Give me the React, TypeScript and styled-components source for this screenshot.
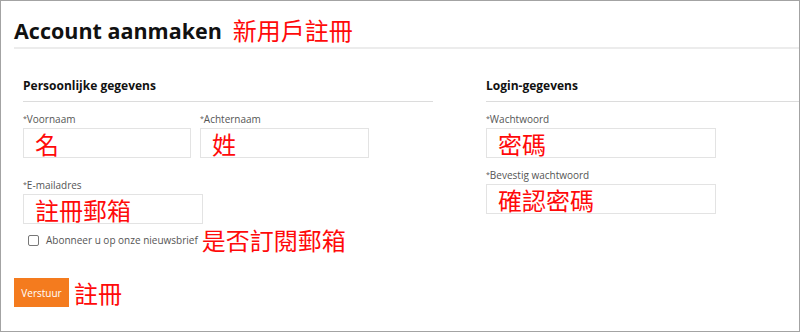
import styled, { createGlobalStyle } from 'styled-components';

const GlobalStyle = createGlobalStyle`
  html, body {
    margin: 0;
    padding: 0;
    background: #fff;
  }
  body {
    font-family: 'Open Sans', 'Noto Sans', sans-serif;
  }
`;

const CJK = `'Noto Sans CJK TC', 'Noto Sans CJK SC', sans-serif`;

const Frame = styled.div`
  width: 800px;
  height: 332px;
  box-sizing: border-box;
  border: 1px solid #a3a3a3;
  overflow: hidden;
`;

const Header = styled.div`
  display: flex;
  align-items: center;
  gap: 11px;
  margin-left: 13px;
  height: 48px;
  box-sizing: border-box;
  border-bottom: 2px solid #ececec;
`;

const Title = styled.h1`
  margin: 0;
  font-size: 21.5px;
  font-weight: 700;
  color: #111;
  line-height: 1;
  padding-top: 14px;
`;

const Note = styled.span<{ $size?: number }>`
  font-family: ${CJK};
  font-size: ${(p) => p.$size ?? 24}px;
  font-weight: 400;
  color: #ff0a0a;
  line-height: 1;
  white-space: nowrap;
`;

const HeaderNote = styled(Note)`
  padding-top: 12px;
`;

const Columns = styled.div`
  display: flex;
  gap: 53px;
  padding-left: 22px;
  margin-top: 29px;
`;

const Column = styled.section<{ $width?: number }>`
  display: flex;
  flex-direction: column;
  width: ${(p) => (p.$width ? `${p.$width}px` : 'auto')};
  flex: ${(p) => (p.$width ? 'none' : '1')};
`;

const SectionTitle = styled.h2`
  margin: 0;
  font-size: 12px;
  font-weight: 700;
  color: #111;
  line-height: 16px;
  padding-bottom: 7px;
  border-bottom: 1px solid #dcdcdc;
`;

const Row = styled.div<{ $top: number }>`
  display: flex;
  gap: 9px;
  margin-top: ${(p) => p.$top}px;
`;

const Field = styled.div<{ $width: number }>`
  display: flex;
  flex-direction: column;
  width: ${(p) => p.$width}px;
`;

const Label = styled.label`
  font-size: 10px;
  color: #555;
  line-height: 12px;
  height: 12px;
  margin-bottom: 3px;
  white-space: nowrap;

  &::before {
    content: '*';
    font-size: 7px;
    vertical-align: top;
  }
`;

const Input = styled.div`
  height: 30px;
  box-sizing: border-box;
  border: 1px solid #e3e3e3;
  padding: 1px 11px 0;
  display: flex;
  align-items: center;
  overflow: visible;
`;

const CheckRow = styled.div`
  display: flex;
  align-items: center;
  margin-top: 4px;
  padding-left: 5px;
`;

const CheckBox = styled.span`
  width: 11px;
  height: 11px;
  box-sizing: border-box;
  border: 1px solid #777;
  border-radius: 2px;
  margin-right: 7px;
`;

const CheckText = styled.span`
  font-size: 10px;
  color: #555;
  margin-right: 4px;
  white-space: nowrap;
`;

const Footer = styled.div`
  display: flex;
  align-items: center;
  gap: 5px;
  margin-left: 13px;
  margin-top: 26px;
`;

const SubmitButton = styled.button`
  width: 55px;
  height: 29px;
  border: none;
  background: #f47b1e;
  color: #fff;
  font-family: 'Open Sans', sans-serif;
  font-size: 10px;
  padding: 0;
  cursor: pointer;
`;

export default function App() {
  return (
    <>
      <GlobalStyle />
      <Frame>
        <Header>
          <Title>Account aanmaken</Title>
          <HeaderNote>新用戶註冊</HeaderNote>
        </Header>

        <Columns>
          <Column $width={410}>
            <SectionTitle>Persoonlijke gegevens</SectionTitle>
            <Row $top={11}>
              <Field $width={168}>
                <Label>Voornaam</Label>
                <Input><Note>名</Note></Input>
              </Field>
              <Field $width={169}>
                <Label>Achternaam</Label>
                <Input><Note>姓</Note></Input>
              </Field>
            </Row>
            <Row $top={21}>
              <Field $width={180}>
                <Label>E-mailadres</Label>
                <Input><Note>註冊郵箱</Note></Input>
              </Field>
            </Row>
            <CheckRow>
              <CheckBox />
              <CheckText>Abonneer u op onze nieuwsbrief</CheckText>
              <Note>是否訂閱郵箱</Note>
            </CheckRow>
          </Column>

          <Column>
            <SectionTitle>Login-gegevens</SectionTitle>
            <Row $top={11}>
              <Field $width={230}>
                <Label>Wachtwoord</Label>
                <Input><Note>密碼</Note></Input>
              </Field>
            </Row>
            <Row $top={11}>
              <Field $width={230}>
                <Label>Bevestig wachtwoord</Label>
                <Input><Note>確認密碼</Note></Input>
              </Field>
            </Row>
          </Column>
        </Columns>

        <Footer>
          <SubmitButton>Verstuur</SubmitButton>
          <Note>註冊</Note>
        </Footer>
      </Frame>
    </>
  );
}
